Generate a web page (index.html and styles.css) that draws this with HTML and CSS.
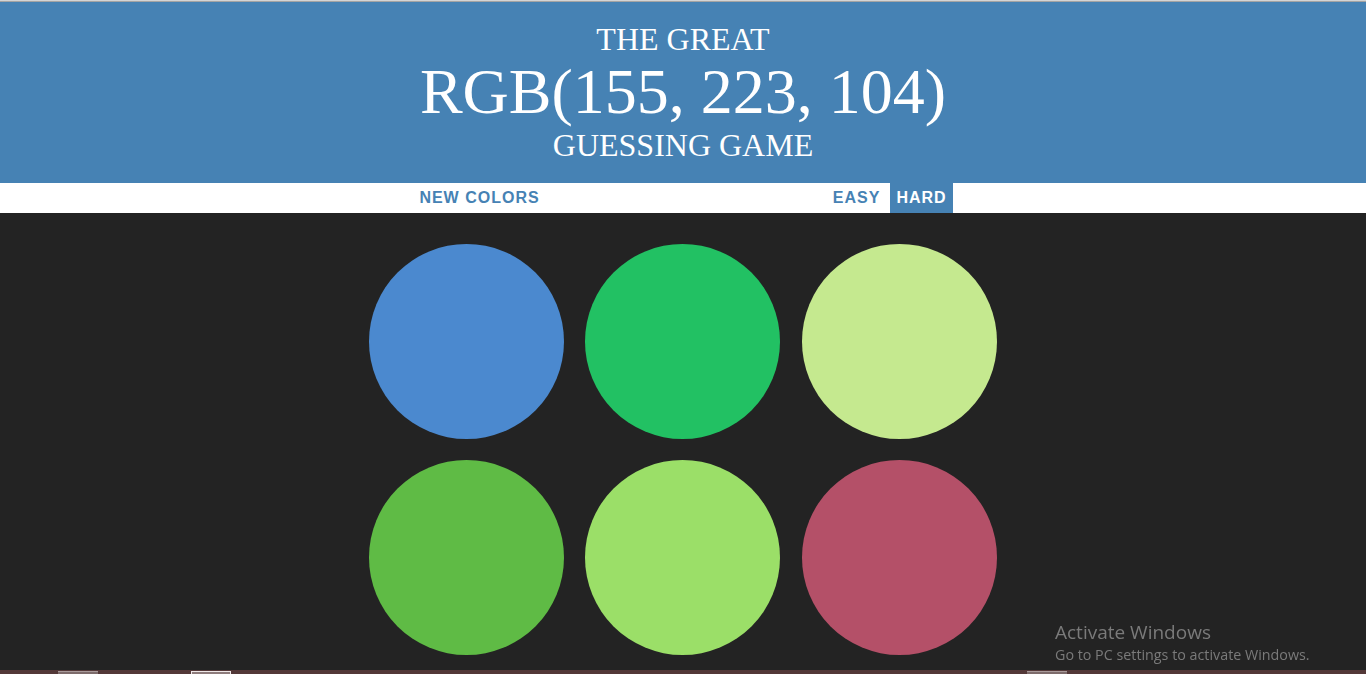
FILE: index.html
```html
<!DOCTYPE html>
<html lang="en">
<head>
<meta charset="utf-8">
<title>Color Game</title>
<link rel="stylesheet" href="styles.css">
</head>
<body>
<div class="topline"></div>
<h1 class="title">The Great<br><span class="color-display">RGB(155, 223, 104)</span><br>Guessing Game</h1>
<div class="stripe">
  <button class="btn">New Colors</button>
  <span class="message"></span>
  <button class="btn">Easy</button>
  <button class="btn selected">Hard</button>
</div>
<div class="container">
  <div class="square sq1"></div>
  <div class="square sq2"></div>
  <div class="square sq3"></div>
  <div class="square sq4"></div>
  <div class="square sq5"></div>
  <div class="square sq6"></div>
</div>
<div class="watermark">
  <div class="wm-title">Activate Windows</div>
  <div class="wm-sub">Go to PC settings to activate Windows.</div>
</div>
<div class="taskbar">
  <span class="tb-item tb1"></span>
  <span class="tb-item tb2"></span>
  <span class="tb-item tb3"></span>
</div>
</body>
</html>
```
FILE: styles.css
```css
html, body {
  margin: 0;
  padding: 0;
}
body {
  background: #232323;
  font-family: "Liberation Sans", Arial, sans-serif;
  overflow: hidden;
  height: 674px;
}
.topline {
  height: 2px;
  background: linear-gradient(#d4d4d4 0, #d4d4d4 1px, #a4a4a4 1px, #a4a4a4 2px);
}
.title {
  margin: 0;
  padding: 20px 0;
  background: steelblue;
  color: #fff;
  font-family: "Liberation Serif", "Times New Roman", serif;
  font-size: 32px;
  font-weight: normal;
  line-height: 1.1;
  text-transform: uppercase;
  text-align: center;
}
.color-display {
  font-size: 200%;
}
.stripe {
  background: #fff;
  height: 30px;
  display: flex;
  justify-content: center;
  align-items: stretch;
  gap: 4px;
}
.btn {
  border: none;
  background: none;
  margin: 0;
  padding: 1px 6px;
  height: 100%;
  font-family: "Liberation Sans", Arial, sans-serif;
  font-size: 16px;
  font-weight: 700;
  letter-spacing: 1px;
  text-transform: uppercase;
  color: steelblue;
}
.btn.selected {
  background: steelblue;
  color: #fff;
}
.message {
  width: 20%;
}
.container {
  width: 650px;
  margin: 20px auto;
  display: flex;
  flex-wrap: wrap;
}
.square {
  width: 30%;
  padding-bottom: 30%;
  margin: 1.66%;
  border-radius: 50%;
}
.sq1 { background: #4b89cf; }
.sq2 { background: #22c163; }
.sq3 { background: #c5e98f; }
.sq4 { background: #5fbb45; }
.sq5 { background: #9bdf68; }
.sq6 { background: #b45068; }
.watermark {
  position: fixed;
  left: 1055px;
  top: 620px;
  font-family: "Open Sans", "Noto Sans", sans-serif;
  color: #7a7a7a;
}
.wm-title {
  font-size: 19px;
  line-height: 24px;
}
.wm-sub {
  font-size: 14.3px;
  line-height: 22px;
}
.taskbar {
  position: fixed;
  left: 0;
  right: 0;
  bottom: 0;
  height: 4px;
  background: #533838;
}
.tb-item {
  position: absolute;
  top: 1px;
  width: 40px;
  height: 3px;
  background: #7d6b6b;
  box-shadow: inset 0 1px 0 #a99a9a;
}
.tb1 { left: 58px; }
.tb2 { left: 191px; background: #8e7c7c; box-shadow: inset 0 1px 0 #f0e8e8, inset 1px 0 0 #f0e8e8, inset -1px 0 0 #f0e8e8; }
.tb3 { left: 1027px; }
```
